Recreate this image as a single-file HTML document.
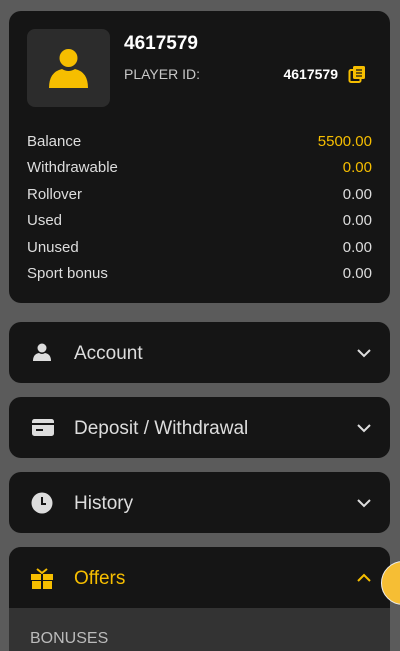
<!DOCTYPE html>
<html><head><style>
html,body{margin:0;width:400px;height:651px;overflow:hidden}
body{background:#5b5b5b;font-family:"Liberation Sans",sans-serif;position:relative}
.card{position:absolute;left:9px;top:11px;width:381px;height:292px;background:#151515;border-radius:12px}
.av{position:absolute;left:18px;top:18px;width:83px;height:78px;background:#2c2c2c;border-radius:8px}
.name{position:absolute;left:115px;top:22px;color:#fff;font-size:19px;font-weight:bold}
.pid{position:absolute;left:115px;top:55px;color:#c8c8c8;font-size:14px}
.pidv{position:absolute;right:52px;top:55px;color:#fff;font-size:14px;font-weight:bold}
.row{position:absolute;left:18px;right:18px;font-size:15px;color:#ddd;display:flex;justify-content:space-between}
.y{color:#f6be00}
.item{position:absolute;left:9px;width:381px;height:61px;background:#151515;border-radius:12px}
.item .t{position:absolute;left:65px;top:21px;font-size:19px;color:#ddd}
.item svg.ic{position:absolute;left:22px;top:20px}
.item svg.ch{position:absolute;right:18px;top:25px}
</style></head><body>
<div class="card">
 <div class="av"><svg width="83" height="78"><circle cx="41.5" cy="29" r="9" fill="#f6be00"/><path d="M22 59 Q22 43 35 40 Q41.5 44 48 40 Q61 43 61 59 Z" fill="#f6be00"/></svg></div>
 <div class="name">4617579</div>
 <div class="pid">PLAYER ID:</div>
 <div class="pidv">4617579</div>
 <svg style="position:absolute;left:339px;top:54px" width="18" height="19"><rect x="1.5" y="5" width="11" height="12" rx="1.5" fill="none" stroke="#f6be00" stroke-width="2"/><rect x="5" y="1" width="12" height="13" rx="1.5" fill="#f6be00"/><path d="M8 5h6M8 8h6M8 11h6" stroke="#151515" stroke-width="1.2"/></svg>
 <div class="row" style="top:122px"><span>Balance</span><span class="y">5500.00</span></div>
 <div class="row" style="top:148px"><span>Withdrawable</span><span class="y">0.00</span></div>
 <div class="row" style="top:175px"><span>Rollover</span><span>0.00</span></div>
 <div class="row" style="top:201px"><span>Used</span><span>0.00</span></div>
 <div class="row" style="top:228px"><span>Unused</span><span>0.00</span></div>
 <div class="row" style="top:254px"><span>Sport bonus</span><span>0.00</span></div>
</div>
<div class="item" style="top:322px"><svg class="ic" width="22" height="20"><circle cx="11" cy="6" r="4.5" fill="#ddd"/><path d="M2 19 Q2 12 8 11 Q11 13 14 11 Q20 12 20 19Z" fill="#ddd"/></svg><div class="t">Account</div><svg class="ch" width="16" height="12"><path d="M2 3l6 6 6-6" fill="none" stroke="#ddd" stroke-width="2"/></svg></div>
<div class="item" style="top:397px"><svg class="ic" width="24" height="20" style="top:21px"><rect x="1" y="1" width="22" height="17" rx="2.5" fill="#ddd"/><rect x="1" y="5" width="22" height="2" fill="#151515"/><rect x="5" y="11" width="7" height="2" fill="#151515"/></svg><div class="t">Deposit / Withdrawal</div><svg class="ch" width="16" height="12"><path d="M2 3l6 6 6-6" fill="none" stroke="#ddd" stroke-width="2"/></svg></div>
<div class="item" style="top:472px"><svg class="ic" width="24" height="22" style="top:20px"><circle cx="11" cy="11" r="10.5" fill="#ddd"/><path d="M11 5v7h4" fill="none" stroke="#151515" stroke-width="2"/></svg><div class="t">History</div><svg class="ch" width="16" height="12"><path d="M2 3l6 6 6-6" fill="none" stroke="#ddd" stroke-width="2"/></svg></div>
<div style="position:absolute;left:9px;top:547px;width:381px;height:120px;background:#333;border-radius:12px 12px 0 0;overflow:hidden">
 <div style="position:absolute;left:0;top:0;width:381px;height:61px;background:#151515"></div>
 <svg style="position:absolute;left:21px;top:21px" width="24" height="22"><path d="M7 1l5 4 5-4" fill="none" stroke="#f6be00" stroke-width="2"/><rect x="1" y="6" width="22" height="6" fill="#f6be00"/><rect x="2" y="13" width="20" height="8" fill="#f6be00"/><rect x="11" y="6" width="2" height="15" fill="#151515"/></svg>
 <div style="position:absolute;left:65px;top:21px;font-size:19px;color:#f6be00">Offers</div>
 <svg style="position:absolute;right:18px;top:25px" width="16" height="12"><path d="M2 9l6-6 6 6" fill="none" stroke="#f6be00" stroke-width="2"/></svg>
 <div style="position:absolute;left:21px;top:83px;font-size:16px;color:#bbb">BONUSES</div>
</div>
<div style="position:absolute;left:381px;top:561px;width:44px;height:44px;border-radius:50%;background:#f6be34;border:1.5px solid #eee;box-sizing:border-box"></div>
</body></html>
